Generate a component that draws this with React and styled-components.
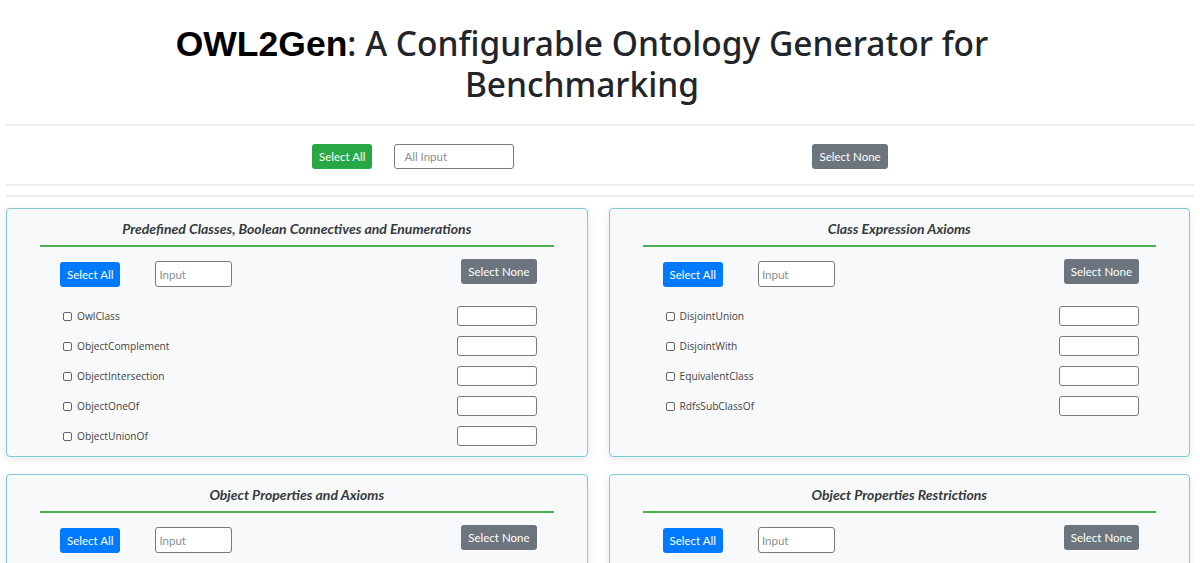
import React from "react";
import styled, { createGlobalStyle } from "styled-components";

const GlobalStyle = createGlobalStyle`
  body {
    margin: 0;
    background: #fff;
    font-family: "Open Sans", "Noto Sans", sans-serif;
    color: #212529;
  }
  * { box-sizing: border-box; }
`;

const sections = [
  {
    title: "Predefined Classes, Boolean Connectives and Enumerations",
    items: ["OwlClass", "ObjectComplement", "ObjectIntersection", "ObjectOneOf", "ObjectUnionOf"],
  },
  {
    title: "Class Expression Axioms",
    items: ["DisjointUnion", "DisjointWith", "EquivalentClass", "RdfsSubClassOf"],
  },
  { title: "Object Properties and Axioms", items: ["InverseOf", "ObjectProperty"] },
  { title: "Object Properties Restrictions", items: ["AllValuesFrom", "SomeValuesFrom"] },
];

const App = () => {
  return (
    <>
      <GlobalStyle />
      <Page>
        <Title>
          <Brand>OWL2Gen</Brand>: A Configurable Ontology Generator for Benchmarking
        </Title>
        <Rule />
        <TopBar>
          <Button variant="success">Select All</Button>
          <AllInput placeholder="All Input" />
          <Button variant="secondary" style={{ marginLeft: 298 }}>
            Select None
          </Button>
        </TopBar>
        <Rule />
        <Rule $tight />
        <CardGrid>
          {sections.map((section) => (
            <Card key={section.title}>
              <CardTitle>{section.title}</CardTitle>
              <GreenLine />
              <Controls>
                <Button variant="primary" $offset={3}>
                  Select All
                </Button>
                <SmallInput placeholder="Input" />
                <Spacer />
                <Button variant="secondary">Select None</Button>
              </Controls>
              <ItemList>
                {section.items.map((item) => (
                  <ItemRow key={item}>
                    <CheckLabel>
                      <Box type="checkbox" />
                      {item}
                    </CheckLabel>
                    <CountInput />
                  </ItemRow>
                ))}
              </ItemList>
            </Card>
          ))}
        </CardGrid>
      </Page>
    </>
  );
};

const Page = styled.div`
  padding: 0 6px;
`;

const Title = styled.h1`
  width: 880px;
  margin: 23px 0 0 136px;
  text-align: center;
  font-family: "Noto Sans", "Open Sans", sans-serif;
  font-weight: 500;
  font-size: 33.5px;
  line-height: 40px;
  color: #212529;
`;

const Brand = styled.span`
  font-family: "Liberation Sans", Arial, sans-serif;
  font-weight: 700;
  font-size: 35.5px;
  color: #000;
`;

const Rule = styled.hr`
  border: 0;
  border-top: 2px solid #eeeeee;
  margin: ${(props) => (props.$tight ? "9px 0 11px" : "20px 0 0")};
`;

const TopBar = styled.div`
  display: flex;
  align-items: center;
  padding: 18px 0 15px 306px;
  margin-bottom: -20px;
`;

const colors = {
  success: "#28a745",
  primary: "#007bff",
  secondary: "#6c757d",
};

const Button = styled.button`
  height: 25px;
  padding: 0 7px;
  margin-top: ${(props) => props.$offset || 0}px;
  border: 0;
  border-radius: 3px;
  background: ${(props) => colors[props.variant]};
  color: #fff;
  font-family: "Lato", "Open Sans", sans-serif;
  font-size: 11.5px;
  white-space: nowrap;
  cursor: pointer;
`;

const inputBase = `
  border: 1px solid #7a7a7a;
  border-radius: 3px;
  background: #fff;
  font-family: "Lato", "Open Sans", sans-serif;
  font-size: 11.5px;
  color: #495057;
  &::placeholder { color: #8a8f94; }
`;

const AllInput = styled.input`
  ${inputBase}
  width: 120px;
  height: 25px;
  margin-left: 22px;
  padding: 0 9px;
`;

const CardGrid = styled.div`
  display: grid;
  grid-template-columns: 1fr 1fr;
  column-gap: 21px;
  row-gap: 17px;
  padding-right: 4px;
`;

const Card = styled.div`
  background: #f8f9fa;
  border: 1px solid #80c9d4;
  border-radius: 4px;
  box-shadow: 0 3px 10px rgba(0, 0, 0, 0.09);
  padding: 10px 0 5px;
`;

const CardTitle = styled.div`
  text-align: center;
  font-family: "Lato", "Open Sans", sans-serif;
  font-style: italic;
  font-weight: 700;
  font-size: 14px;
  line-height: 20px;
  color: #343a40;
`;

const GreenLine = styled.div`
  height: 2px;
  margin: 6px 33px 0;
  background: #4caf50;
`;

const Controls = styled.div`
  display: flex;
  align-items: flex-start;
  margin-top: 12px;
  padding: 0 50px 0 53px;
`;

const SmallInput = styled.input`
  ${inputBase}
  width: 77px;
  height: 26px;
  margin: 2px 0 0 35px;
  padding: 0 3px;
`;

const Spacer = styled.div`
  flex: 1;
`;

const ItemList = styled.div`
  margin-top: 14px;
  padding: 0 50px 0 56px;
`;

const ItemRow = styled.div`
  display: flex;
  align-items: center;
  justify-content: space-between;
  height: 30px;
`;

const CheckLabel = styled.label`
  display: flex;
  align-items: center;
  font-size: 10.2px;
  color: #444;
`;

const Box = styled.input`
  appearance: none;
  width: 9px;
  height: 9px;
  margin: 0 5px 0 0;
  border: 1px solid #666;
  border-radius: 2px;
  background: #fff;
`;

const CountInput = styled.input`
  ${inputBase}
  width: 80px;
  height: 20px;
  padding: 0 4px;
`;

export default App;
